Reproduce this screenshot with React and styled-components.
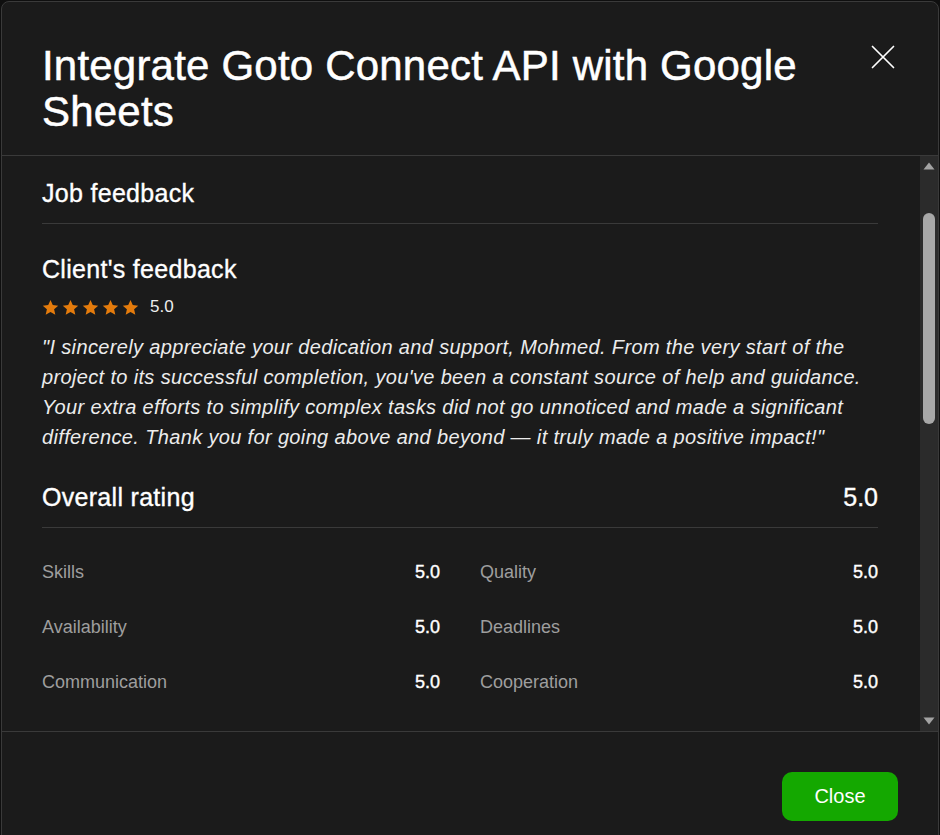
import React, { useLayoutEffect, useRef, useState } from "react";
import styled, { createGlobalStyle } from "styled-components";

const GlobalStyle = createGlobalStyle`
  html, body {
    margin: 0;
    padding: 0;
    background: #0f0f0f;
    overflow: hidden;
  }
  body {
    font-family: "Liberation Sans", Arial, Helvetica, sans-serif;
    color: #f2f2f2;
  }
  * { box-sizing: border-box; }
`;

const Modal = styled.div`
  margin: 1px 1px 0 1px;
  height: 860px;
  background: #1b1b1b;
  border: 1px solid #3a3a3a;
  border-radius: 8px;
  display: flex;
  flex-direction: column;
`;

const Header = styled.header`
  display: flex;
  justify-content: space-between;
  align-items: flex-start;
  padding: 41px 42px 20px 40px;
  border-bottom: 1px solid #3a3a3a;
`;

const Title = styled.h1`
  margin: 0;
  flex: 1;
  padding-right: 40px;
  font-size: 42px;
  line-height: 46px;
  font-weight: 400;
  -webkit-text-stroke: 0.5px currentColor;
  color: #ffffff;
  letter-spacing: 0.2px;
`;

const IconButton = styled.button`
  margin-top: 2px;
  margin-right: 1px;
  padding: 0;
  border: none;
  background: transparent;
  color: #ffffff;
  width: 24px;
  height: 24px;
  display: flex;
  cursor: pointer;
`;

const BodyWrap = styled.div`
  position: relative;
  height: 575px;
  flex: none;
`;

const ScrollArea = styled.div`
  height: 100%;
  overflow-y: scroll;
  scrollbar-width: none;
  padding: 0 40px;
  &::-webkit-scrollbar { display: none; }
`;

const ScrollTrack = styled.div`
  position: absolute;
  top: 0;
  right: 0;
  bottom: 0;
  width: 18px;
  background: #2b2b2b;
`;

const ScrollArrow = styled.svg`
  position: absolute;
  left: 3px;
  width: 12px;
  height: 8px;
  fill: #a3a3a3;
  ${(p) => (p.$down ? "bottom: 6px;" : "top: 6px;")}
`;

const ScrollThumb = styled.div`
  position: absolute;
  left: 3px;
  width: 12px;
  border-radius: 6px;
  background: #a8a8a8;
`;

const Content = styled.div`
  width: 836px;
`;

const Section = styled.section`
  display: flex;
  flex-direction: column;
`;

const SectionTitle = styled.h2`
  margin: ${(p) => p.$mt || 0}px 0 0 0;
  font-size: 25px;
  line-height: 32px;
  font-weight: 400;
  letter-spacing: 0.3px;
  -webkit-text-stroke: 0.35px currentColor;
  color: #ffffff;
`;

const Divider = styled.div`
  height: 1px;
  flex: none;
  background: #3a3a3a;
  margin-top: ${(p) => p.$mt || 14}px;
`;

const StarRow = styled.div`
  margin-top: 12px;
  display: flex;
  align-items: center;
  height: 20px;
  gap: 3px;
`;

const Star = styled.svg`
  width: 17px;
  height: 17px;
  fill: #e47b0c;
`;

const StarScore = styled.span`
  margin-left: 8px;
  font-size: 17px;
  color: #eeeeee;
`;

const Quote = styled.p`
  margin: 15px 0 0 0;
  font-size: 20px;
  line-height: 30px;
  letter-spacing: 0.35px;
  font-style: italic;
  color: #ececec;
`;

const OverallRow = styled.div`
  margin-top: 29px;
  display: flex;
  justify-content: space-between;
  align-items: center;
`;

const OverallScore = styled.span`
  font-size: 25px;
  line-height: 32px;
  -webkit-text-stroke: 0.35px currentColor;
  color: #ffffff;
`;

const Grid = styled.div`
  margin-top: 32px;
  display: grid;
  grid-template-columns: 1fr 1fr;
  column-gap: 40px;
  row-gap: 31px;
`;

const Metric = styled.div`
  display: flex;
  justify-content: space-between;
  font-size: 18px;
  line-height: 24px;
`;

const MetricLabel = styled.span`
  color: #9e9e9e;
`;

const MetricValue = styled.span`
  color: #ffffff;
  -webkit-text-stroke: 0.4px currentColor;
`;

const DetailRow = styled.div`
  display: flex;
  justify-content: space-between;
  font-size: 18px;
  line-height: 24px;
  margin-top: 16px;
`;

const Spacer = styled.div`
  flex: none;
  height: ${(p) => p.$h}px;
`;

const Footer = styled.footer`
  border-top: 1px solid #3a3a3a;
  display: flex;
  justify-content: flex-end;
  padding: 40px 40px 24px 40px;
`;

const PrimaryButton = styled.button`
  width: 116px;
  height: 49px;
  border: none;
  border-radius: 10px;
  background: #14a800;
  color: #ffffff;
  font-family: "Liberation Sans", Arial, sans-serif;
  font-size: 20px;
  cursor: pointer;
`;

const StarIcon = () => (
  <Star viewBox="0 0 24 24" aria-hidden="true">
    <path d="M12 1.5l3.2 7.1 7.7.8-5.8 5.2 1.7 7.6L12 18.3 5.2 22.2l1.7-7.6L1.1 9.4l7.7-.8z" />
  </Star>
);

const Stars = ({ score }) => (
  <StarRow>
    {[0, 1, 2, 3, 4].map((i) => (
      <StarIcon key={i} />
    ))}
    <StarScore>{score}</StarScore>
  </StarRow>
);

const metrics = [
  ["Skills", "5.0"],
  ["Quality", "5.0"],
  ["Availability", "5.0"],
  ["Deadlines", "5.0"],
  ["Communication", "5.0"],
  ["Cooperation", "5.0"],
];

const ARROW = 17;

export default function App() {
  const scrollRef = useRef(null);
  const jobRef = useRef(null);
  const [thumb, setThumb] = useState({ top: 57, height: 209 });

  const measure = () => {
    const el = scrollRef.current;
    if (!el) return;
    const track = el.clientHeight - ARROW * 2;
    const h = Math.max(24, (el.clientHeight / el.scrollHeight) * track);
    const max = el.scrollHeight - el.clientHeight;
    const top = ARROW + (max > 0 ? (el.scrollTop / max) * (track - h) : 0);
    setThumb({ top, height: h });
  };

  useLayoutEffect(() => {
    const el = scrollRef.current;
    if (el && jobRef.current) {
      el.scrollTop = jobRef.current.offsetTop - el.offsetTop - 21;
    }
    measure();
  }, []);

  return (
    <>
      <GlobalStyle />
      <Modal role="dialog" aria-label="Integrate Goto Connect API with Google Sheets">
        <Header>
          <Title>Integrate Goto Connect API with Google Sheets</Title>
          <IconButton aria-label="Close">
            <svg width="24" height="24" viewBox="0 0 24 24" fill="none" stroke="currentColor" strokeWidth="1.7" strokeLinecap="round">
              <path d="M1.5 1.5l21 21M22.5 1.5l-21 21" />
            </svg>
          </IconButton>
        </Header>
        <BodyWrap>
          <ScrollArea ref={scrollRef} onScroll={measure}>
            <Content>
              <Section>
                <SectionTitle $mt={20}>Contract details</SectionTitle>
                <DetailRow>
                  <MetricLabel>Status</MetricLabel>
                  <MetricValue>Completed</MetricValue>
                </DetailRow>
                <Divider $mt={16} />
                <Spacer $h={22} />
              </Section>
              <Section>
                <SectionTitle ref={jobRef}>Job feedback</SectionTitle>
                <Divider />
                <SectionTitle $mt={29}>Client's feedback</SectionTitle>
                <Stars score="5.0" />
                <Quote>
                  "I sincerely appreciate your dedication and support, Mohmed. From the very start of the
                  project to its successful completion, you've been a constant source of help and guidance.
                  Your extra efforts to simplify complex tasks did not go unnoticed and made a significant
                  difference. Thank you for going above and beyond — it truly made a positive impact!"
                </Quote>
                <OverallRow>
                  <SectionTitle>Overall rating</SectionTitle>
                  <OverallScore>5.0</OverallScore>
                </OverallRow>
                <Divider />
                <Grid>
                  {metrics.map(([label, value]) => (
                    <Metric key={label}>
                      <MetricLabel>{label}</MetricLabel>
                      <MetricValue>{value}</MetricValue>
                    </Metric>
                  ))}
                </Grid>
              </Section>
              <Section>
                <Divider $mt={40} />
                <SectionTitle $mt={29}>Freelancer's feedback</SectionTitle>
                <Stars score="5.0" />
                <Quote>"Great client to work with. Clear requirements and fast responses."</Quote>
                <Divider $mt={29} />
                <SectionTitle $mt={29}>Project details</SectionTitle>
                <DetailRow>
                  <MetricLabel>Job type</MetricLabel>
                  <MetricValue>Fixed price</MetricValue>
                </DetailRow>
                <DetailRow>
                  <MetricLabel>Skills</MetricLabel>
                  <MetricValue>API Integration, Google Sheets</MetricValue>
                </DetailRow>
                <DetailRow>
                  <MetricLabel>Category</MetricLabel>
                  <MetricValue>Scripting &amp; Automation</MetricValue>
                </DetailRow>
                <Spacer $h={439} />
              </Section>
            </Content>
          </ScrollArea>
          <ScrollTrack aria-hidden="true">
            <ScrollArrow viewBox="0 0 12 8">
              <path d="M6 0.5L11.5 7.5H0.5z" />
            </ScrollArrow>
            <ScrollThumb style={{ top: thumb.top, height: thumb.height }} />
            <ScrollArrow $down viewBox="0 0 12 8">
              <path d="M0.5 0.5H11.5L6 7.5z" />
            </ScrollArrow>
          </ScrollTrack>
        </BodyWrap>
        <Footer>
          <PrimaryButton>Close</PrimaryButton>
        </Footer>
      </Modal>
    </>
  );
}
